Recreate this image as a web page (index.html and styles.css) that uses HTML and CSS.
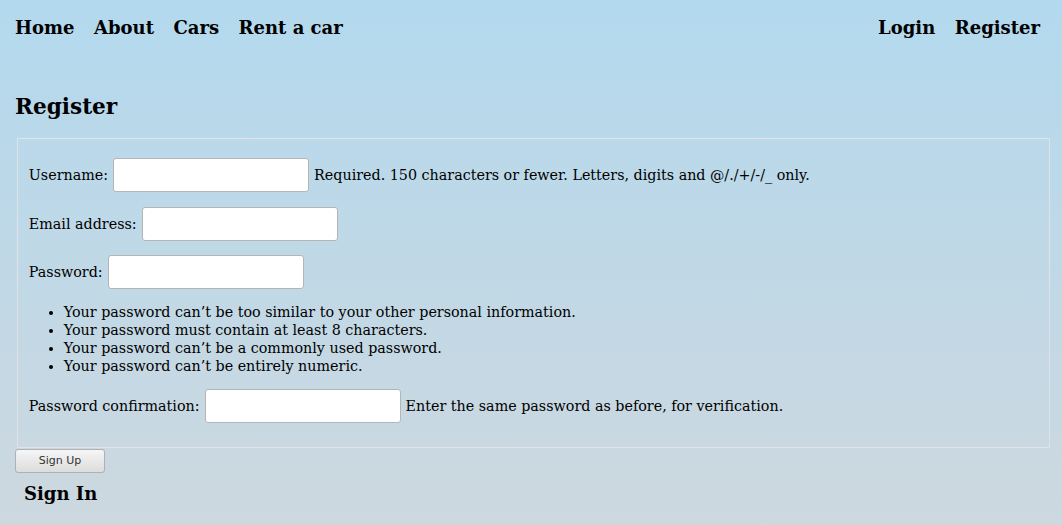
FILE: index.html
```html
<!DOCTYPE html>
<html lang="en">
<head>
<meta charset="utf-8">
<title>Register</title>
<link rel="stylesheet" href="styles.css">
</head>
<body>
<nav class="topnav">
  <div class="nav-left">
    <a href="#">Home</a>
    <a href="#">About</a>
    <a href="#">Cars</a>
    <a href="#">Rent a car</a>
  </div>
  <div class="nav-right">
    <a href="#">Login</a>
    <a href="#">Register</a>
  </div>
</nav>
<main class="content">
  <h2 class="page-title">Register</h2>
  <form class="reg-form">
    <fieldset class="fields">
      <p class="row"><label>Username:</label> <input type="text" class="field"> <span class="help">Required. 150 characters or fewer. Letters, digits and @/./+/-/_ only.</span></p>
      <p class="row"><label>Email address:</label> <input type="email" class="field"></p>
      <p class="row"><label>Password:</label> <input type="password" class="field"></p>
      <ul class="rules">
        <li>Your password can’t be too similar to your other personal information.</li>
        <li>Your password must contain at least 8 characters.</li>
        <li>Your password can’t be a commonly used password.</li>
        <li>Your password can’t be entirely numeric.</li>
      </ul>
      <p class="row row-after-list"><label>Password confirmation:</label> <input type="password" class="field"> <span class="help">Enter the same password as before, for verification.</span></p>
    </fieldset>
    <button type="button" class="btn">Sign Up</button>
  </form>
  <a href="#" class="signin">Sign In</a>
</main>
</body>
</html>
```

FILE: styles.css
```css
html {
  min-height: 100%;
  background: linear-gradient(to bottom, #b3d9ee 0%, #cdd8df 100%);
}
body {
  margin: 0;
  min-height: 525px;
  font-family: "DejaVu Serif", serif;
  font-size: 14.4px;
  color: #000;
}
.topnav {
  display: flex;
  justify-content: space-between;
  padding: 17px 22px 0 15px;
  height: 28px;
}
.nav-left, .nav-right {
  display: flex;
  gap: 19.5px;
}
.topnav a {
  color: #000;
  text-decoration: none;
  font-weight: bold;
  font-size: 18px;
}
.content {
  padding: 0 10px 0 15px;
}
.page-title {
  margin: 50px 0 0;
  font-size: 21.6px;
  line-height: 24px;
}
.reg-form {
  margin-top: 19px;
}
.fields {
  margin: 0 2px;
  border: 1px solid #dfe3e5;
  padding: 0.35em 0.75em 10px;
}
.row {
  margin: 1em 0;
  display: flex;
  align-items: center;
  gap: 5px;
  font-size: 14.3px;
}
.row-after-list {
  margin-top: 13.3px;
}
.field {
  width: 196px;
  height: 34px;
  box-sizing: border-box;
  border: 1px solid #b5b5b5;
  border-radius: 3px;
  background: #fff;
  margin: 0;
}
.rules {
  margin: 13.4px 0 0;
  padding-left: 35px;
  line-height: 18px;
  font-size: 14.3px;
}
.btn {
  display: block;
  margin: 1px 0 0;
  width: 90px;
  height: 24px;
  font-family: "DejaVu Sans", sans-serif;
  font-size: 11px;
  color: #333;
  border: 1px solid #b0b0b0;
  border-radius: 3px;
  background: linear-gradient(to bottom, #f6f6f6, #dcdcdc);
}
.signin {
  display: block;
  width: fit-content;
  margin: 10px 0 0 9px;
  font-weight: bold;
  font-size: 18px;
  line-height: 21px;
  color: #000;
  text-decoration: none;
}
```
